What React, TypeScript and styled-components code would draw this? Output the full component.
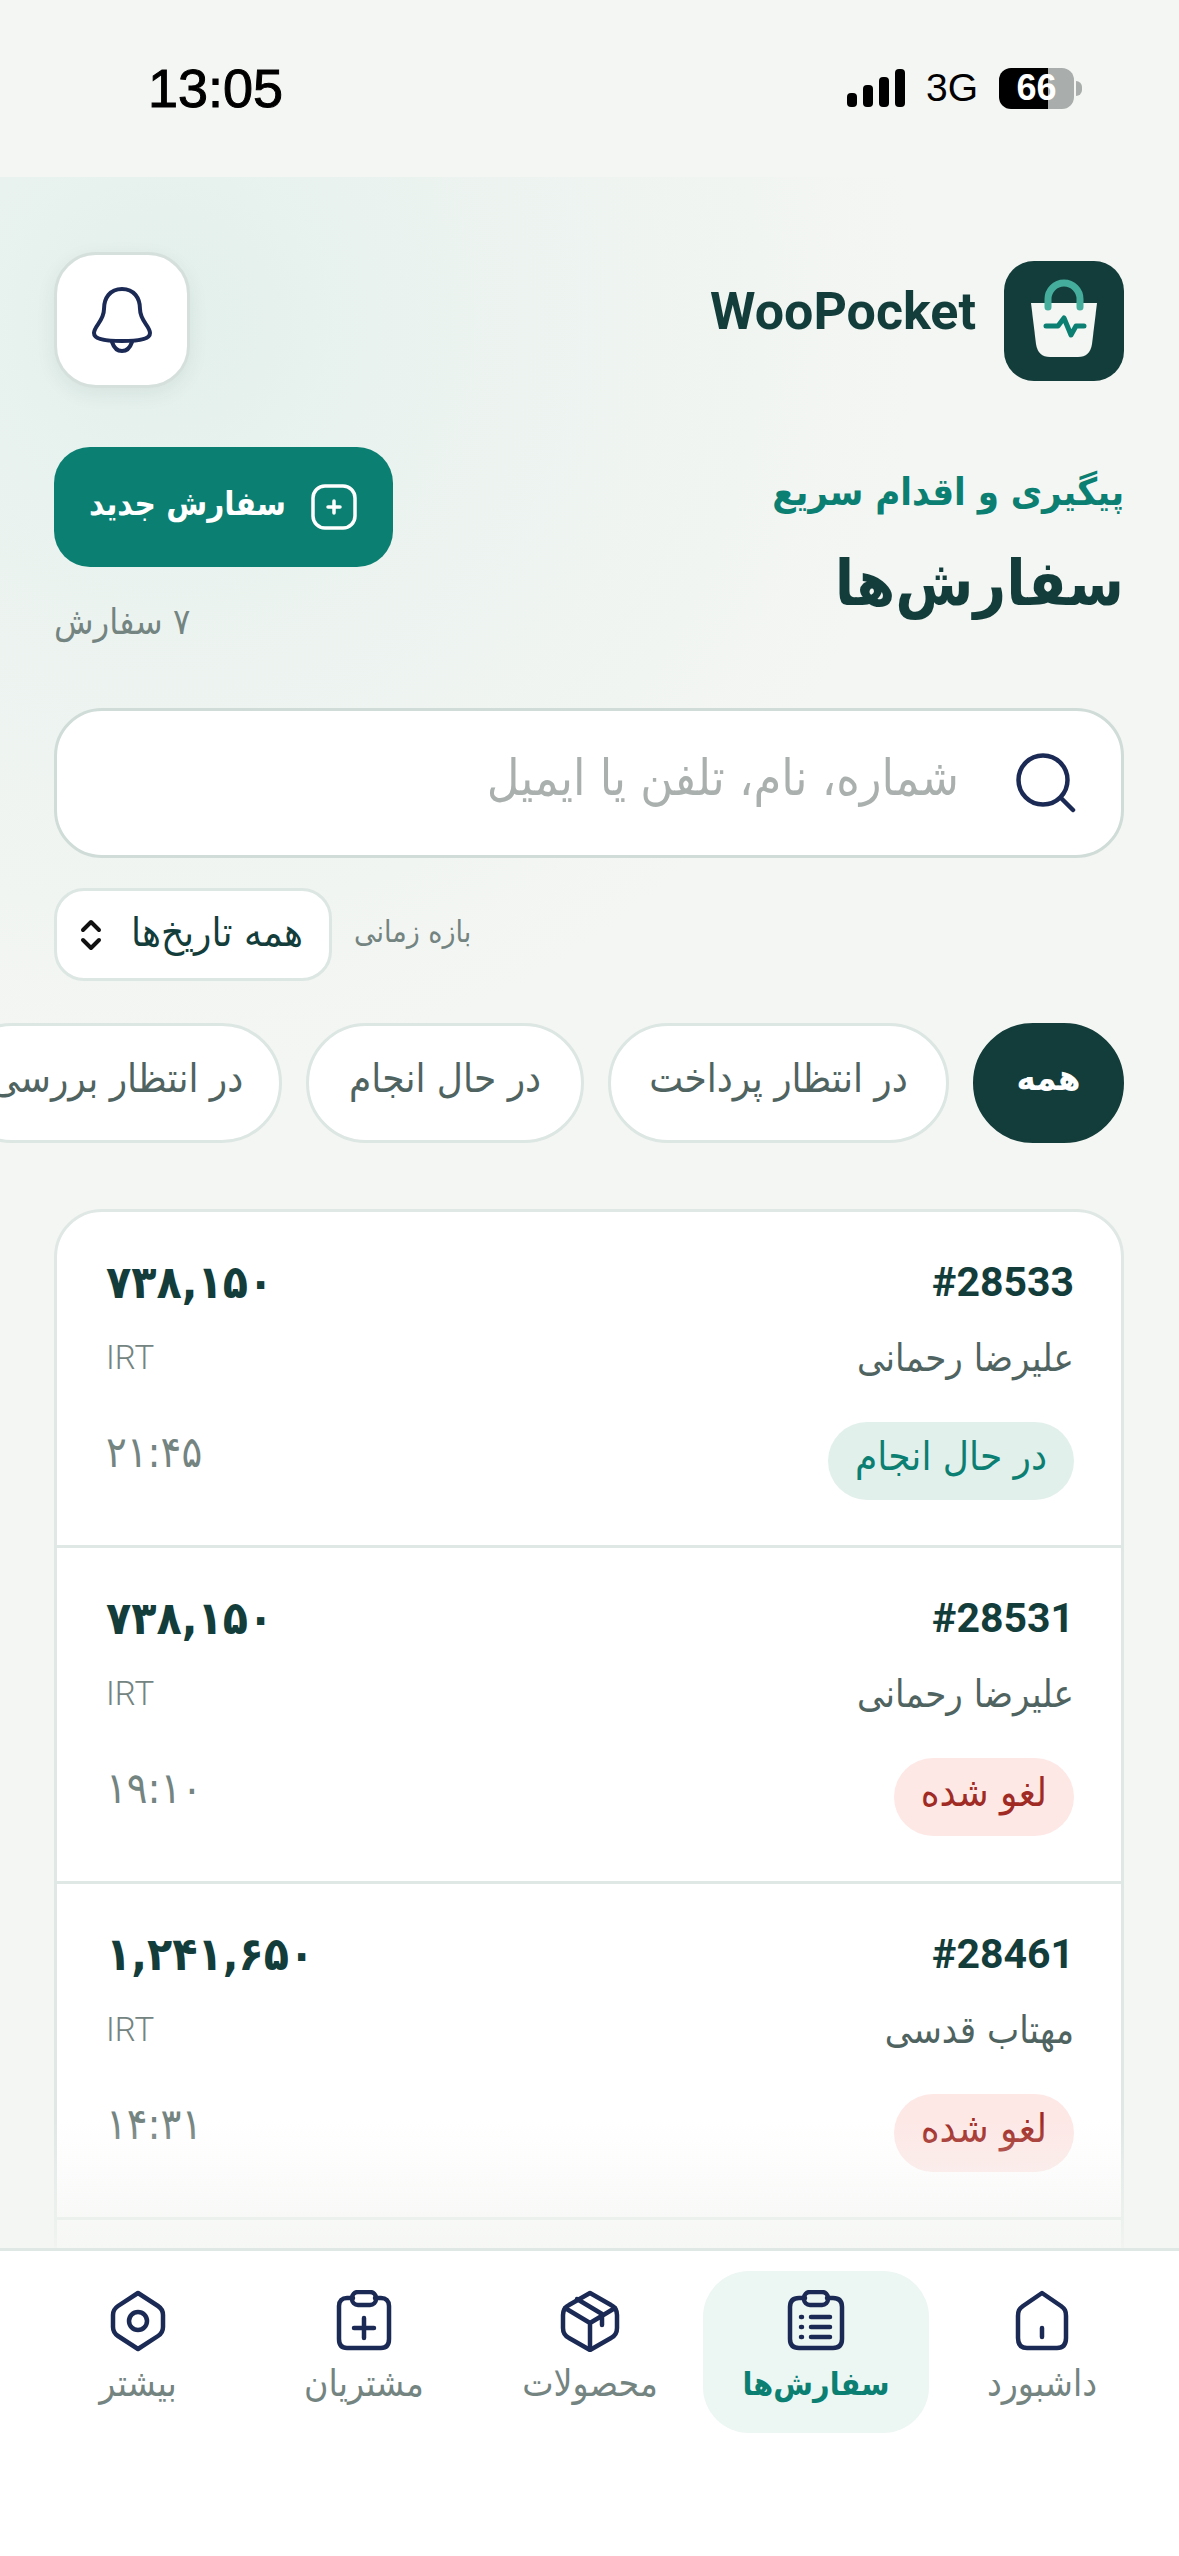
import React from 'react';
import styled, { createGlobalStyle } from 'styled-components';

const GlobalStyle = createGlobalStyle`
  html, body {
    margin: 0;
    padding: 0;
    background: #f4f6f3;
  }
  * {
    box-sizing: border-box;
  }
`;

const persian = `'DejaVu Sans Condensed', 'DejaVu Sans', sans-serif`;
const latin = `Roboto, 'Liberation Sans', sans-serif`;

const Page = styled.div`
  position: relative;
  width: 1179px;
  height: 2556px;
  overflow: hidden;
  direction: rtl;
  background: #f4f6f3;
  font-family: ${persian};
`;

const StatusBar = styled.div`
  height: 177px;
  direction: ltr;
  display: flex;
  align-items: center;
  justify-content: space-between;
  padding: 0 105px 1px 148px;
  background: #f4f6f3;
`;

const Clock = styled.span`
  font-family: 'Liberation Sans', sans-serif;
  font-size: 54px;
  font-weight: 400;
  -webkit-text-stroke: 1px #000;
  color: #000;
`;

const StatusRight = styled.div`
  display: flex;
  align-items: center;
  gap: 21px;
`;

const NetLabel = styled.span`
  font-family: 'Liberation Sans', sans-serif;
  font-size: 39px;
  color: #000;
`;

const Battery = styled.div`
  position: relative;
  width: 75px;
  height: 41px;
  border-radius: 12px;
  background: linear-gradient(90deg, #000 0 49px, #a9adab 49px);
  display: flex;
  align-items: center;
  justify-content: center;
  font-family: 'Liberation Sans', sans-serif;
  font-size: 36px;
  font-weight: 700;
  color: #fff;
  &::after {
    content: '';
    position: absolute;
    right: -8px;
    top: 13px;
    width: 6px;
    height: 15px;
    border-radius: 0 8px 8px 0;
    background: #a9adab;
  }
`;

const Main = styled.main`
  height: 2379px;
  padding: 75px 55px 0 54px;
  background:
    radial-gradient(circle 760px at 14% 6%, #e3f0ec 0%, rgba(227, 240, 236, 0.45) 45%, rgba(244, 246, 243, 0) 100%),
    #f4f6f3;
`;

const Header = styled.header`
  height: 136px;
  display: flex;
  align-items: center;
  justify-content: space-between;
`;

const Brand = styled.div`
  display: flex;
  align-items: center;
  gap: 28px;
  margin-top: 2px;
`;

const BrandName = styled.span`
  font-family: ${latin};
  font-size: 52px;
  font-weight: 700;
  margin-bottom: 20px;
  color: #133d3a;
`;

const BellButton = styled.button`
  width: 136px;
  height: 136px;
  border-radius: 42px;
  border: 3px solid #d5e0dc;
  background: #fff;
  display: flex;
  align-items: center;
  justify-content: center;
  box-shadow: 0 6px 20px rgba(19, 61, 58, 0.07);
  padding: 0;
`;

const Hero = styled.section`
  height: 261px;
  margin-top: 59px;
  display: flex;
  justify-content: space-between;
`;

const HeroText = styled.div`
  display: flex;
  flex-direction: column;
`;

const Eyebrow = styled.div`
  font-size: 38px;
  font-weight: 700;
  line-height: 50px;
  margin-top: 20px;
  color: #0b7f72;
`;

const Title = styled.h1`
  margin: 22px 0 0;
  font-size: 63px;
  font-weight: 700;
  line-height: 90px;
  color: #133d3a;
`;

const HeroActions = styled.div`
  display: flex;
  flex-direction: column;
  align-items: flex-end;
`;

const NewOrder = styled.button`
  width: 339px;
  height: 120px;
  border: 0;
  border-radius: 36px;
  background: #0b7f72;
  color: #fff;
  display: flex;
  align-items: center;
  justify-content: center;
  gap: 24px;
  font-family: ${persian};
  font-size: 33px;
  font-weight: 700;
  padding: 0;
`;

const NewOrderLabel = styled.span`
  margin-bottom: 8px;
`;

const OrderCount = styled.div`
  margin-top: 33px;
  font-size: 36px;
  line-height: 44px;
  color: #748481;
`;

const Search = styled.div`
  height: 150px;
  border: 3px solid #cfdcd8;
  border-radius: 48px;
  background: #fff;
  display: flex;
  align-items: center;
  gap: 57px;
  padding: 0 45px 0 0;
`;

const Placeholder = styled.span`
  font-size: 50px;
  margin-bottom: 11px;
  color: #a9b0ae;
`;

const RangeRow = styled.div`
  margin-top: 30px;
  display: flex;
  flex-direction: row-reverse;
  justify-content: flex-start;
  align-items: center;
  gap: 22px;
`;

const RangeLabel = styled.span`
  font-size: 30px;
  margin-bottom: 7px;
  color: #748481;
`;

const RangeSelect = styled.div`
  width: 278px;
  height: 93px;
  border: 3px solid #dce6e3;
  border-radius: 30px;
  background: #fff;
  display: flex;
  align-items: center;
  justify-content: space-between;
  padding: 0 26px 5px 22px;
  font-size: 40px;
  color: #133d3a;
  svg {
    margin-top: 5px;
  }
`;

const Filters = styled.div`
  margin-top: 42px;
  display: flex;
  gap: 24px;
`;

const Chip = styled.div<{ $active?: boolean; $width: number }>`
  flex: 0 0 ${({ $width }) => $width}px;
  height: 120px;
  padding-bottom: 11px;
  border-radius: 60px;
  border: 3px solid ${({ $active }) => ($active ? '#133d3a' : '#dce6e3')};
  background: ${({ $active }) => ($active ? '#133d3a' : '#fff')};
  color: ${({ $active }) => ($active ? '#fff' : '#4f6461')};
  font-size: ${({ $active }) => ($active ? 36 : 40)}px;
  font-weight: ${({ $active }) => ($active ? 700 : 400)};
  display: flex;
  align-items: center;
  justify-content: center;
  white-space: nowrap;
`;

const OrderList = styled.div`
  margin-top: 66px;
  border: 3px solid #dfe8e5;
  border-radius: 48px 48px 0 0;
  background: #fff;
`;

const OrderRow = styled.div`
  height: 336px;
  padding: 44px 47px 0 49px;
  border-bottom: 3px solid #dfe8e5;
`;

const RowLine = styled.div`
  display: flex;
  align-items: center;
  justify-content: space-between;
`;

const OrderId = styled.span`
  direction: ltr;
  font-family: ${latin};
  font-size: 41px;
  font-weight: 700;
  line-height: 52px;
  color: #133d3a;
`;

const Amount = styled.span`
  direction: ltr;
  font-size: 46px;
  font-weight: 700;
  line-height: 52px;
  color: #133d3a;
`;

const Customer = styled.span`
  font-size: 38px;
  line-height: 48px;
  color: #4f6461;
`;

const Currency = styled.span`
  font-family: ${latin};
  font-size: 33px;
  font-weight: 300;
  line-height: 48px;
  color: #748481;
`;

const MetaLine = styled(RowLine)`
  margin-top: 26px;
`;

const FootLine = styled(RowLine)`
  margin-top: 40px;
  align-items: flex-start;
`;

const StatusPill = styled.span<{ $tone: 'progress' | 'cancelled' }>`
  height: 78px;
  padding: 0 27px 11px;
  border-radius: 39px;
  display: flex;
  align-items: center;
  font-size: 40px;
  background: ${({ $tone }) => ($tone === 'progress' ? '#e2f0ec' : '#fde8e6')};
  color: ${({ $tone }) => ($tone === 'progress' ? '#0b7f72' : '#a02a24')};
`;

const Time = styled.span`
  font-size: 43px;
  font-weight: 400;
  line-height: 60px;
  color: #748481;
`;

const Fade = styled.div`
  position: absolute;
  left: 0;
  right: 0;
  top: 2120px;
  height: 130px;
  pointer-events: none;
  background: linear-gradient(180deg, rgba(244, 246, 243, 0) 0%, rgba(244, 246, 243, 0.85) 100%);
`;

const BottomNav = styled.nav`
  position: absolute;
  left: 0;
  right: 0;
  bottom: 0;
  height: 308px;
  background: #fff;
  border-top: 3px solid #dfe8e5;
  padding: 20px 24px 0;
  display: grid;
  grid-template-columns: repeat(5, 226px);
  align-items: start;
`;

const NavItem = styled.div<{ $active?: boolean }>`
  height: 162px;
  border-radius: 46px;
  background: ${({ $active }) => ($active ? '#ecf6f2' : 'transparent')};
  color: ${({ $active }) => ($active ? '#0b7f72' : '#748481')};
  display: flex;
  flex-direction: column;
  align-items: center;
  padding-top: 19px;
  font-size: ${({ $active }) => ($active ? 32 : 37)}px;
  font-weight: ${({ $active }) => ($active ? 700 : 400)};
`;

const NavLabel = styled.span`
  margin-top: 8px;
  line-height: 48px;
`;

const navy = '#1b2a55';

function NavIcon({ children }: { children: React.ReactNode }) {
  return (
    <svg width="62" height="62" viewBox="0 0 62 62" fill="none" stroke={navy} strokeWidth="4.5" strokeLinecap="round" strokeLinejoin="round">
      {children}
    </svg>
  );
}

function SignalIcon() {
  return (
    <svg width="58" height="38" viewBox="0 0 58 38" fill="#000">
      <rect x="0" y="24" width="10" height="14" rx="4" />
      <rect x="16" y="16" width="10" height="22" rx="4" />
      <rect x="32" y="8" width="10" height="30" rx="4" />
      <rect x="48" y="0" width="10" height="38" rx="4" />
    </svg>
  );
}

function LogoMark() {
  return (
    <svg width="120" height="120" viewBox="0 0 120 120" fill="none">
      <rect width="120" height="120" rx="30" fill="#133d3a" />
      <path d="M27 42H93L88 83Q86 96 74 96H46Q34 96 32 83Z" fill="#f4f6f3" />
      <path d="M44 46V38A16 16 0 0 1 76 38V46" stroke="#45ad9c" strokeWidth="7" strokeLinecap="round" />
      <path d="M42 65H54L60 57L67 74L72 65H80" stroke="#0b7f72" strokeWidth="5" strokeLinecap="round" strokeLinejoin="round" />
    </svg>
  );
}

function BellIcon() {
  return (
    <svg width="62" height="66" viewBox="0 0 62 66" fill="none" stroke={navy} strokeWidth="4" strokeLinecap="round" strokeLinejoin="round">
      <path d="M31 2C19 2 13 11 13 22C13 34 3 39 3 46C3 51 10 54 31 54C52 54 59 51 59 46C59 39 49 34 49 22C49 11 43 2 31 2Z" />
      <path d="M21 55C23 61 27 64 31 64C35 64 39 61 41 55" />
    </svg>
  );
}

function PlusBoxIcon() {
  return (
    <svg width="48" height="48" viewBox="0 0 48 48" fill="none" stroke="#fff" strokeWidth="3.5" strokeLinecap="round">
      <rect x="3" y="3" width="42" height="42" rx="12" />
      <path d="M24 18V30M18 24H30" />
    </svg>
  );
}

function SearchIcon() {
  return (
    <svg width="60" height="60" viewBox="0 0 60 60" fill="none" stroke={navy} strokeWidth="4.5" strokeLinecap="round">
      <circle cx="27" cy="27" r="24.5" />
      <path d="M45 45L57 57" />
    </svg>
  );
}

function UpDownIcon() {
  return (
    <svg width="24" height="32" viewBox="0 0 24 32" fill="none" stroke="#111" strokeWidth="4" strokeLinecap="round" strokeLinejoin="round">
      <path d="M4 11L12 3L20 11M4 21L12 29L20 21" />
    </svg>
  );
}

const orders = [
  { id: '#28533', name: 'علیرضا رحمانی', amount: '۷۳۸,۱۵۰', time: '۲۱:۴۵', status: 'در حال انجام', tone: 'progress' as const },
  { id: '#28531', name: 'علیرضا رحمانی', amount: '۷۳۸,۱۵۰', time: '۱۹:۱۰', status: 'لغو شده', tone: 'cancelled' as const },
  { id: '#28461', name: 'مهتاب قدسی', amount: '۱,۲۴۱,۶۵۰', time: '۱۴:۳۱', status: 'لغو شده', tone: 'cancelled' as const },
];

const chips = [
  { label: 'همه', width: 151, active: true },
  { label: 'در انتظار پرداخت', width: 341 },
  { label: 'در حال انجام', width: 278 },
  { label: 'در انتظار بررسی', width: 330 },
];

export default function App() {
  return (
    <Page>
      <GlobalStyle />
      <StatusBar>
        <Clock>13:05</Clock>
        <StatusRight>
          <SignalIcon />
          <NetLabel>3G</NetLabel>
          <Battery>66</Battery>
        </StatusRight>
      </StatusBar>
      <Main>
        <Header>
          <Brand>
            <LogoMark />
            <BrandName>WooPocket</BrandName>
          </Brand>
          <BellButton>
            <BellIcon />
          </BellButton>
        </Header>
        <Hero>
          <HeroText>
            <Eyebrow>پیگیری و اقدام سریع</Eyebrow>
            <Title>سفارش‌ها</Title>
          </HeroText>
          <HeroActions>
            <NewOrder>
              <PlusBoxIcon />
              <NewOrderLabel>سفارش جدید</NewOrderLabel>
            </NewOrder>
            <OrderCount>۷ سفارش</OrderCount>
          </HeroActions>
        </Hero>
        <Search>
          <SearchIcon />
          <Placeholder>شماره، نام، تلفن یا ایمیل</Placeholder>
        </Search>
        <RangeRow>
          <RangeSelect>
            همه تاریخ‌ها
            <UpDownIcon />
          </RangeSelect>
          <RangeLabel>بازه زمانی</RangeLabel>
        </RangeRow>
        <Filters>
          {chips.map((chip) => (
            <Chip key={chip.label} $active={chip.active} $width={chip.width}>
              {chip.label}
            </Chip>
          ))}
        </Filters>
        <OrderList>
          {orders.map((order) => (
            <OrderRow key={order.id}>
              <RowLine>
                <OrderId>{order.id}</OrderId>
                <Amount>{order.amount}</Amount>
              </RowLine>
              <MetaLine>
                <Customer>{order.name}</Customer>
                <Currency>IRT</Currency>
              </MetaLine>
              <FootLine>
                <StatusPill $tone={order.tone}>{order.status}</StatusPill>
                <Time>{order.time}</Time>
              </FootLine>
            </OrderRow>
          ))}
          <OrderRow />
        </OrderList>
      </Main>
      <Fade />
      <BottomNav>
        <NavItem>
          <NavIcon>
            <path d="M31 3L50 16C54 19 55 21 55 26V48C55 55 52 58 46 58H16C10 58 7 55 7 48V26C7 21 8 19 12 16Z" />
            <path d="M31 38V47" />
          </NavIcon>
          <NavLabel>داشبورد</NavLabel>
        </NavItem>
        <NavItem $active>
          <NavIcon>
            <path d="M20 8H14C8 8 5 11 5 17V49C5 55 8 58 14 58H48C54 58 57 55 57 49V17C57 11 54 8 48 8H42" />
            <rect x="19" y="2" width="24" height="13" rx="6" />
            <path d="M26 27H45M26 37H45M26 47H45M16 27H17M16 37H17M16 47H17" />
          </NavIcon>
          <NavLabel>سفارش‌ها</NavLabel>
        </NavItem>
        <NavItem>
          <NavIcon>
            <path d="M31 3L52 15C56 17 58 20 58 25V38C58 43 56 46 52 48L31 60L10 48C6 46 4 43 4 38V25C4 20 6 17 10 15Z" />
            <path d="M6 18L31 33L56 18M31 33V59M18 9L43 24V35" />
          </NavIcon>
          <NavLabel>محصولات</NavLabel>
        </NavItem>
        <NavItem>
          <NavIcon>
            <path d="M20 8H14C9 8 6 11 6 16V49C6 55 9 58 14 58H48C53 58 56 55 56 49V16C56 11 53 8 48 8H42" />
            <rect x="19" y="2" width="24" height="13" rx="6" />
            <path d="M31 28V48M21 38H41" />
          </NavIcon>
          <NavLabel>مشتریان</NavLabel>
        </NavItem>
        <NavItem>
          <NavIcon>
            <path d="M31 3L51 16C54 18 56 21 56 25V37C56 41 54 44 51 46L31 59L11 46C8 44 6 41 6 37V25C6 21 8 18 11 16Z" />
            <circle cx="31" cy="31" r="9" />
          </NavIcon>
          <NavLabel>بیشتر</NavLabel>
        </NavItem>
      </BottomNav>
    </Page>
  );
}
